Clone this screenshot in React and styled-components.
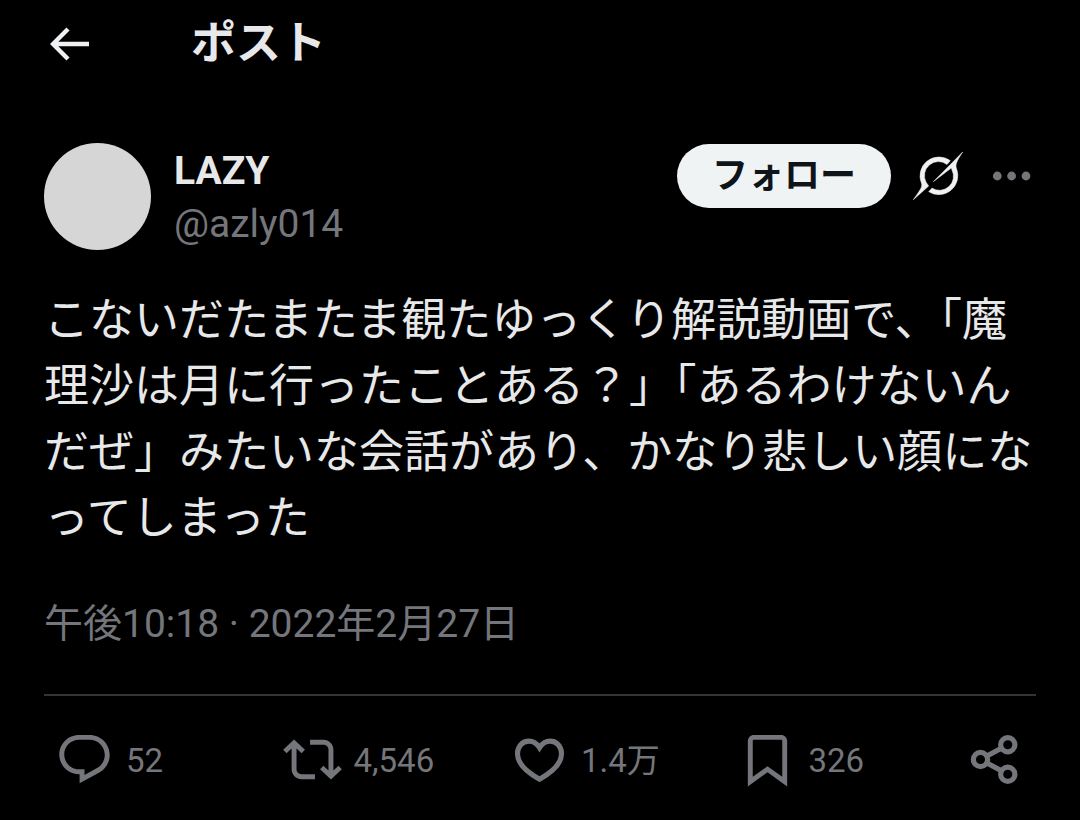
import React from "react";
import styled, { createGlobalStyle } from "styled-components";

const stats = [
  {
    label: "返信",
    count: "52",
    icon: (
      <path d="M1.751 10c0-4.42 3.584-8 8.005-8h4.366c4.49 0 8.129 3.64 8.129 8.13 0 2.96-1.607 5.68-4.196 7.11l-8.054 4.46v-3.69h-.067c-4.49.1-8.183-3.51-8.183-8.01zm8.005-6c-3.317 0-6.005 2.69-6.005 6 0 3.37 2.77 6.08 6.138 6.01l.351-.01h1.761v2.3l5.087-2.81c1.951-1.08 3.163-3.13 3.163-5.36 0-3.39-2.744-6.13-6.129-6.13H9.756z" />
    ),
  },
  {
    label: "リポスト",
    count: "4,546",
    icon: (
      <path d="M4.5 3.88l4.432 4.14-1.364 1.46L5.5 7.55V16c0 1.1.896 2 2 2H13v2H7.5c-2.209 0-4-1.79-4-4V7.55L1.432 9.48.068 8.02 4.5 3.88zM16.5 6H11V4h5.5c2.209 0 4 1.79 4 4v8.45l2.068-1.93 1.364 1.46-4.432 4.14-4.432-4.14 1.364-1.46 2.068 1.93V8c0-1.1-.896-2-2-2z" />
    ),
  },
  {
    label: "いいね",
    count: "1.4万",
    icon: (
      <path
        d="M12 7.2C10.8 5.3 9.3 4.5 7.7 4.5 5 4.5 3.05 6.7 3.05 9.7c0 4.3 3.9 7.5 8.95 10.3 5.05-2.8 8.95-6 8.95-10.3 0-3-1.95-5.2-4.65-5.2-1.6 0-3.1.8-4.3 2.7z"
        fill="none"
        stroke="currentColor"
        strokeWidth="2.1"
      />
    ),
  },
  {
    label: "ブックマーク",
    count: "326",
    icon: (
      <path d="M4 4.5C4 3.12 5.119 2 6.5 2h11C18.881 2 20 3.12 20 4.5v18.44l-8-5.71-8 5.71V4.5zM6.5 4c-.276 0-.5.22-.5.5v14.56l6-4.29 6 4.29V4.5c0-.28-.224-.5-.5-.5h-11z" />
    ),
  },
  {
    label: "共有",
    icon: (
      <g fill="none" stroke="currentColor" strokeWidth="2.1">
        <circle cx="6.3" cy="12" r="2.9" />
        <circle cx="17.4" cy="6" r="2.9" />
        <circle cx="17.4" cy="18" r="2.9" />
        <path d="M8.9 10.6l5.9-3.2M8.9 13.4l5.9 3.2" />
      </g>
    ),
  },
];

function App() {
  return (
    <>
      <GlobalStyle />
      <Header>
        <IconButton aria-label="戻る">
          <svg width="40" height="34" viewBox="0 0 40 34">
            <path
              d="M39 17H4M18 2L3 17l15 15"
              fill="none"
              stroke="currentColor"
              strokeWidth="4.4"
            />
          </svg>
        </IconButton>
        <Title>ポスト</Title>
      </Header>
      <Post lang="ja">
        <Author>
          <Avatar />
          <Names>
            <Name>LAZY</Name>
            <Handle href="#azly014">@azly014</Handle>
          </Names>
          <Controls>
            <Follow>フォロー</Follow>
            <IconButton aria-label="Grok">
              <svg
                width="50"
                height="48"
                viewBox="0 0 50 48"
                fill="currentColor"
                stroke="currentColor"
                strokeWidth="0.5"
              >
                <path d="M20.3 29.7L49.7 0C43 10 42.3 13 43.5 16.6A19 19 0 0 1 15.7 39.7L19 36.1A14 14 0 0 0 38.9 17.8L38.3 16z" />
                <path d="M.3 47.7C7 38 9.7 35 8.5 31.4A19 19 0 0 1 37.3 8.7L34 12.5A14 14 0 0 0 13.1 30.2L15.7 34z" />
              </svg>
            </IconButton>
            <IconButton aria-label="もっと見る" $muted>
              <svg width="48" height="10" viewBox="0 0 48 10" fill="currentColor">
                <circle cx="12.3" cy="5" r="4.4" />
                <circle cx="26.6" cy="5" r="4.4" />
                <circle cx="41" cy="5" r="4.4" />
              </svg>
            </IconButton>
          </Controls>
        </Author>
        <Text>
          こないだたまたま観たゆっくり解説動画で、「魔理沙は月に行ったことある？」「あるわけないんだぜ」みたいな会話があり、かなり悲しい顔になってしまった
        </Text>
        <Time>午後10:18 · 2022年2月27日</Time>
        <Actions>
          {stats.map(({ label, count, icon }) => (
            <Action key={label} aria-label={label}>
              <svg width="59" height="59" viewBox="0 0 24 24" fill="currentColor">
                {icon}
              </svg>
              {count && <Count>{count}</Count>}
            </Action>
          ))}
        </Actions>
      </Post>
    </>
  );
}

export default App;

const GlobalStyle = createGlobalStyle`
  * {
    box-sizing: border-box;
  }
  body {
    margin: 0;
    background: #000;
    color: #e7e8ea;
    font-family: Roboto, "Noto Sans CJK JP", sans-serif;
  }
  button {
    font-family: inherit;
    border: none;
    padding: 0;
    cursor: pointer;
  }
  svg {
    display: block;
    flex-shrink: 0;
  }
`;

const Header = styled.header`
  display: flex;
  align-items: center;
  gap: 101px;
  height: 88px;
  padding: 0 50px;
`;

const Title = styled.h1`
  margin: 0;
  font-size: 45px;
  line-height: 64px;
  font-weight: 700;
`;

const IconButton = styled.button`
  background: none;
  color: ${({ $muted }) => ($muted ? "#74767b" : "#eff1f2")};
`;

const Post = styled.article`
  padding: 55px 44px 0;
`;

const Author = styled.div`
  display: flex;
  align-items: flex-start;
  gap: 23px;
`;

const Avatar = styled.div`
  width: 107px;
  height: 107px;
  border-radius: 50%;
  background: #d6d6d6;
`;

const Names = styled.div`
  display: flex;
  flex-direction: column;
  flex: 1;
`;

const Name = styled.span`
  font-size: 39px;
  line-height: 56px;
  font-weight: 700;
`;

const Handle = styled.a`
  color: #74767b;
  font-size: 39px;
  line-height: 50px;
  text-decoration: none;
`;

const Controls = styled.div`
  display: flex;
  align-items: center;
  gap: 22px;
  height: 65px;
  padding-right: 3px;
`;

const Follow = styled.button`
  height: 64px;
  padding: 0 35px;
  border-radius: 32px;
  background: #eff3f4;
  color: #0f1419;
  font-size: 36px;
  line-height: 64px;
  font-weight: 700;
`;

const Text = styled.p`
  margin: 38px 0 0;
  font-size: 45px;
  line-height: 66px;
  line-break: normal;
`;

const Time = styled.time`
  display: block;
  margin-top: 44px;
  color: #74767b;
  font-size: 39px;
  line-height: 56px;
`;

const Actions = styled.div`
  display: grid;
  grid-template-columns: repeat(4, 1fr) auto;
  margin-top: 42px;
  padding: 34px 12px 30px 11px;
  border-top: 2px solid #333437;
`;

const Action = styled.button`
  display: flex;
  align-items: center;
  gap: 12px;
  background: none;
  color: #74767b;
`;

const Count = styled.span`
  padding-top: 2px;
  font-size: 33px;
  line-height: 48px;
`;
